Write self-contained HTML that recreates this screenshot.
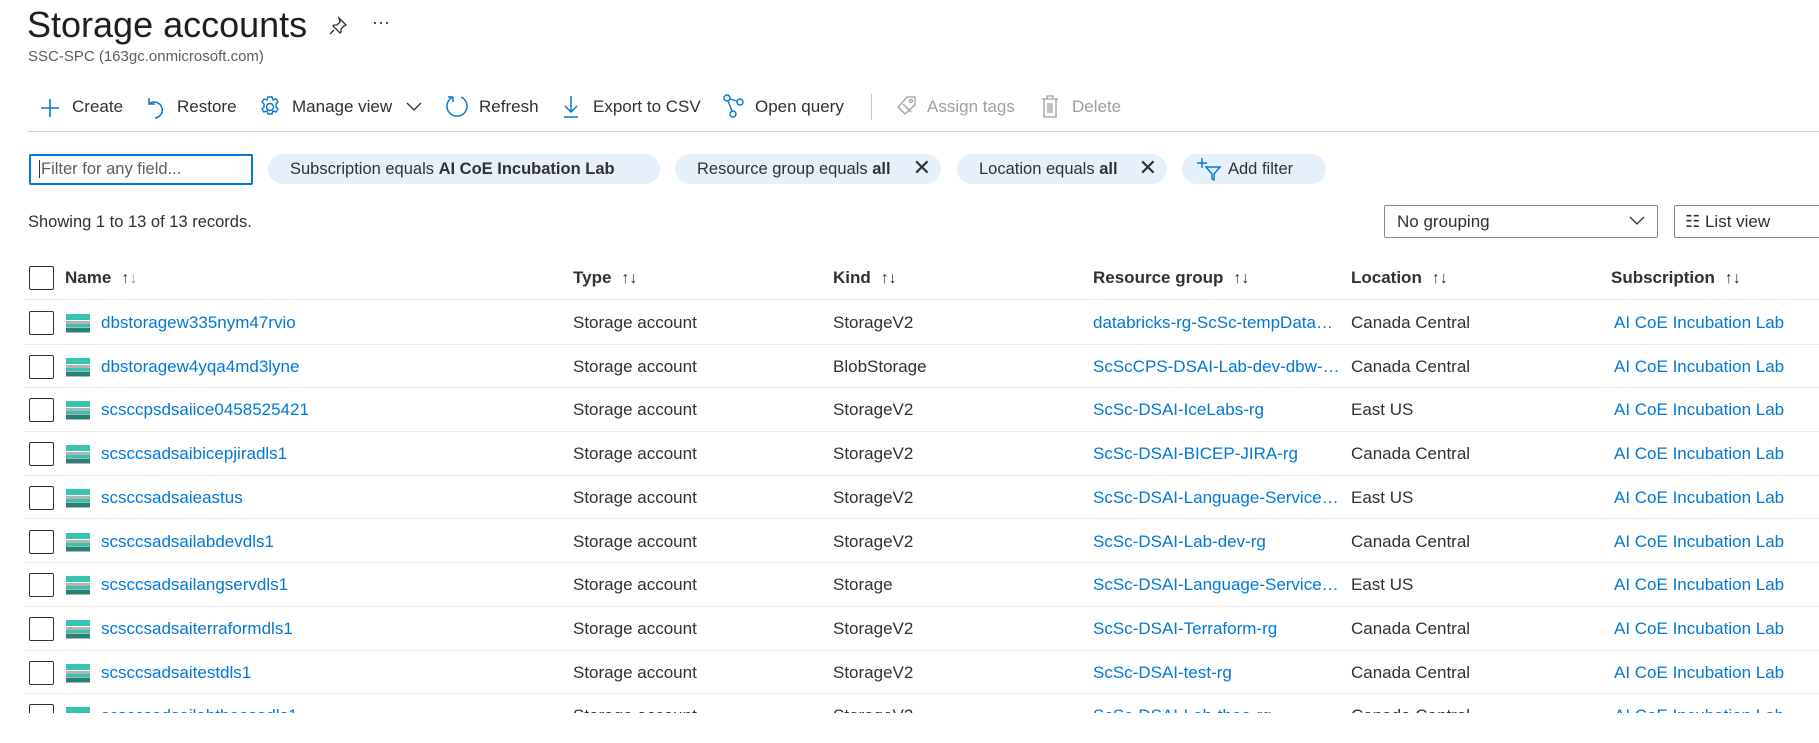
<!DOCTYPE html>
<html><head><meta charset="utf-8"><style>
*{margin:0;padding:0;box-sizing:border-box}
body{width:1819px;height:733px;overflow:hidden;background:#fff;font-family:"Liberation Sans",sans-serif;color:#323130;position:relative}
.a{position:absolute;white-space:nowrap}
.tb{font-size:17px;top:97px}
.dis{color:#a19f9d}
.pill{position:absolute;top:154px;height:30px;border-radius:15px;background:#e6f0fb;font-size:16.5px;line-height:30px;padding-left:22px;white-space:nowrap}
.row{position:absolute;left:24px;right:0;height:43.7px;border-bottom:1px solid #edebe9;font-size:17px}
.row > span{position:absolute;top:12px;white-space:nowrap}
.cb{position:absolute;left:5px;top:10px;width:25px;height:24px;border:1.5px solid #323130;border-radius:2px}
.ic{position:absolute;left:42px;top:13px;width:24px;height:19px}
.lk{color:#0078d4}
.hd{font-weight:bold;font-size:17px}
.sort{font-weight:normal;color:#323130;margin-left:10px;font-size:16px}
</style></head><body>
<div class="a" style="left:27px;top:4px;font-size:36px;color:#201f1e">Storage accounts</div>
<svg class="a" style="left:328px;top:16px" width="20" height="20" viewBox="0 0 20 20" fill="none" stroke="#323130" stroke-width="1.3"><path d="M11 2l7 7-2 1-3 3 0 3-1 1-7-7 1-1 3 0 3-3z M6 14l-4 4"/></svg>
<div class="a" style="left:372px;top:12px;font-size:18px">···</div>
<div class="a" style="left:28px;top:48px;font-size:15px;color:#605e5c">SSC-SPC (163gc.onmicrosoft.com)</div>

<svg class="a" style="left:40px;top:98px" width="20" height="20" viewBox="0 0 20 20" stroke="#0078d4" stroke-width="1.6"><path d="M10 1v18M1 10h18"/></svg>
<div class="a tb" style="left:72px">Create</div>
<svg class="a" style="left:146px;top:96px" width="20" height="24" viewBox="0 0 20 24" fill="none" stroke="#0078d4" stroke-width="1.5"><path d="M3 2v6h6M3 8a8 8 0 1 1 6 14"/></svg>
<div class="a tb" style="left:177px">Restore</div>
<svg class="a" style="left:259px;top:96px" width="22" height="22" viewBox="0 0 22 22" fill="none" stroke="#0078d4" stroke-width="1.4"><circle cx="11" cy="11" r="3.5"/><path d="M9 1h4l1 3 3-1 2 3-2 2 0 3 2 2-2 3-3-1-1 3H9l-1-3-3 1-2-3 2-2 0-3-2-2 2-3 3 1z"/></svg>
<div class="a tb" style="left:292px">Manage view</div>
<svg class="a" style="left:406px;top:102px" width="16" height="10" viewBox="0 0 16 10" fill="none" stroke="#323130" stroke-width="1.3"><path d="M1 1l7 7 7-7"/></svg>
<svg class="a" style="left:446px;top:94px" width="22" height="25" viewBox="0 0 22 25" fill="none" stroke="#0078d4" stroke-width="1.5"><path d="M7 3a10 10 0 1 0 8 0M7 3v5M7 3H2"/></svg>
<div class="a tb" style="left:479px">Refresh</div>
<svg class="a" style="left:562px;top:95px" width="18" height="24" viewBox="0 0 18 24" fill="none" stroke="#0078d4" stroke-width="1.5"><path d="M9 1v16M3 11l6 6 6-6M2 22h14"/></svg>
<div class="a tb" style="left:593px">Export to CSV</div>
<svg class="a" style="left:722px;top:94px" width="22" height="24" viewBox="0 0 22 24" fill="none" stroke="#0078d4" stroke-width="1.4"><circle cx="5" cy="4" r="3"/><circle cx="18" cy="8" r="3"/><circle cx="11" cy="20" r="3"/><path d="M8 5l7 2M6 7l4 10"/></svg>
<div class="a tb" style="left:755px">Open query</div>
<div class="a" style="left:871px;top:94px;width:1px;height:26px;background:#c8c6c4"></div>
<svg class="a dis" style="left:896px;top:95px" width="22" height="22" viewBox="0 0 22 22" fill="none" stroke="#a19f9d" stroke-width="1.3"><path d="M2 12l9-10h8v8l-10 9z M7 9l8 8"/><circle cx="15" cy="6" r="1.5"/></svg>
<div class="a tb dis" style="left:927px">Assign tags</div>
<svg class="a" style="left:1041px;top:95px" width="18" height="23" viewBox="0 0 18 23" fill="none" stroke="#a19f9d" stroke-width="1.3"><path d="M1 4h16M6 4V1h6v3M3 4v18h12V4M7 8v10M9 8v10M11 8v10"/></svg>
<div class="a tb dis" style="left:1072px">Delete</div>
<div class="a" style="left:28px;top:131px;width:1791px;height:1px;background:#d6d6d6"></div>

<div class="a" style="left:29px;top:154px;width:224px;height:31px;border:2px solid #0078d4;border-radius:2px;font-size:16.5px;line-height:27px;padding-left:8px;color:#605e5c"><span style="border-left:1px solid #323130;padding-left:1px">Filter for any field...</span></div>
<div class="pill" style="left:268px;width:392px">Subscription equals <b>AI CoE Incubation Lab</b></div>
<div class="pill" style="left:675px;width:266px">Resource group equals <b>all</b><span style="position:absolute;right:10px;font-size:22px;top:-1px">✕</span></div>
<div class="pill" style="left:957px;width:210px">Location equals <b>all</b><span style="position:absolute;right:10px;font-size:22px;top:-1px">✕</span></div>
<div class="pill" style="left:1182px;width:144px;padding-left:46px">Add filter<svg style="position:absolute;left:15px;top:3px" width="26" height="24" viewBox="0 0 26 24" fill="none" stroke="#0078d4" stroke-width="1.4"><path d="M5 1v10M0 6h10M9 10h14l-6 7v6l-2-1v-5z"/></svg></div>

<div class="a" style="left:28px;top:213px;font-size:16.5px">Showing 1 to 13 of 13 records.</div>
<div class="a" style="left:1384px;top:205px;width:274px;height:33px;border:1px solid #8a8886;border-radius:2px;font-size:17px;line-height:31px;padding-left:12px">No grouping<svg style="position:absolute;right:12px;top:10px" width="16" height="10" viewBox="0 0 16 10" fill="none" stroke="#323130" stroke-width="1.3"><path d="M1 1l7 7 7-7"/></svg></div>
<div class="a" style="left:1674px;top:205px;width:160px;height:33px;border:1px solid #8a8886;border-radius:2px;font-size:17px;line-height:31px;padding-left:10px">☷ List view</div>

<div class="row" style="top:256px;height:44px;border-bottom:1.5px solid #edebe9">
<div class="cb" style="top:10px"></div>
<span class="hd" style="left:41px">Name<span class="sort">↑<span style="color:#a19f9d">↓</span></span></span>
<span class="hd" style="left:549px">Type<span class="sort">↑↓</span></span>
<span class="hd" style="left:809px">Kind<span class="sort">↑↓</span></span>
<span class="hd" style="left:1069px">Resource group<span class="sort">↑↓</span></span>
<span class="hd" style="left:1327px">Location<span class="sort">↑↓</span></span>
<span class="hd" style="left:1587px">Subscription<span class="sort">↑↓</span></span>
</div>

<div id="rows"></div>
<script>
var d=[["dbstoragew335nym47rvio","StorageV2","databricks-rg-ScSc-tempData…","Canada Central"],
["dbstoragew4yqa4md3lyne","BlobStorage","ScScCPS-DSAI-Lab-dev-dbw-…","Canada Central"],
["scsccpsdsaiice0458525421","StorageV2","ScSc-DSAI-IceLabs-rg","East US"],
["scsccsadsaibicepjiradls1","StorageV2","ScSc-DSAI-BICEP-JIRA-rg","Canada Central"],
["scsccsadsaieastus","StorageV2","ScSc-DSAI-Language-Service…","East US"],
["scsccsadsailabdevdls1","StorageV2","ScSc-DSAI-Lab-dev-rg","Canada Central"],
["scsccsadsailangservdls1","Storage","ScSc-DSAI-Language-Service…","East US"],
["scsccsadsaiterraformdls1","StorageV2","ScSc-DSAI-Terraform-rg","Canada Central"],
["scsccsadsaitestdls1","StorageV2","ScSc-DSAI-test-rg","Canada Central"],
["scsccsadsailabtheosadls1","StorageV2","ScSc-DSAI-Lab-theo-rg","Canada Central"]];
var ic='<svg class="ic" viewBox="0 0 24 19"><rect y="0" width="24" height="6" fill="#37c2b1"/><rect y="7" width="24" height="12" fill="#b3b3b3"/><rect y="10" width="24" height="3" fill="#37c2b1"/><rect y="14" width="24" height="4" fill="#258277"/></svg>';
var h='';
for(var i=0;i<d.length;i++){var r=d[i];
h+='<div class="row" style="top:'+(301+i*43.7)+'px"><div class="cb"></div>'+ic+
'<span class="lk" style="left:77px">'+r[0]+'</span><span style="left:549px">Storage account</span><span style="left:809px">'+r[1]+'</span><span class="lk" style="left:1069px">'+r[2]+'</span><span style="left:1327px">'+r[3]+'</span><span class="lk" style="left:1590px">AI CoE Incubation Lab</span></div>';}
h+='<div class="a" style="left:0;top:713px;width:1819px;height:30px;background:#fff;z-index:5"></div>';
document.getElementById('rows').innerHTML=h;
</script>
</body></html>
